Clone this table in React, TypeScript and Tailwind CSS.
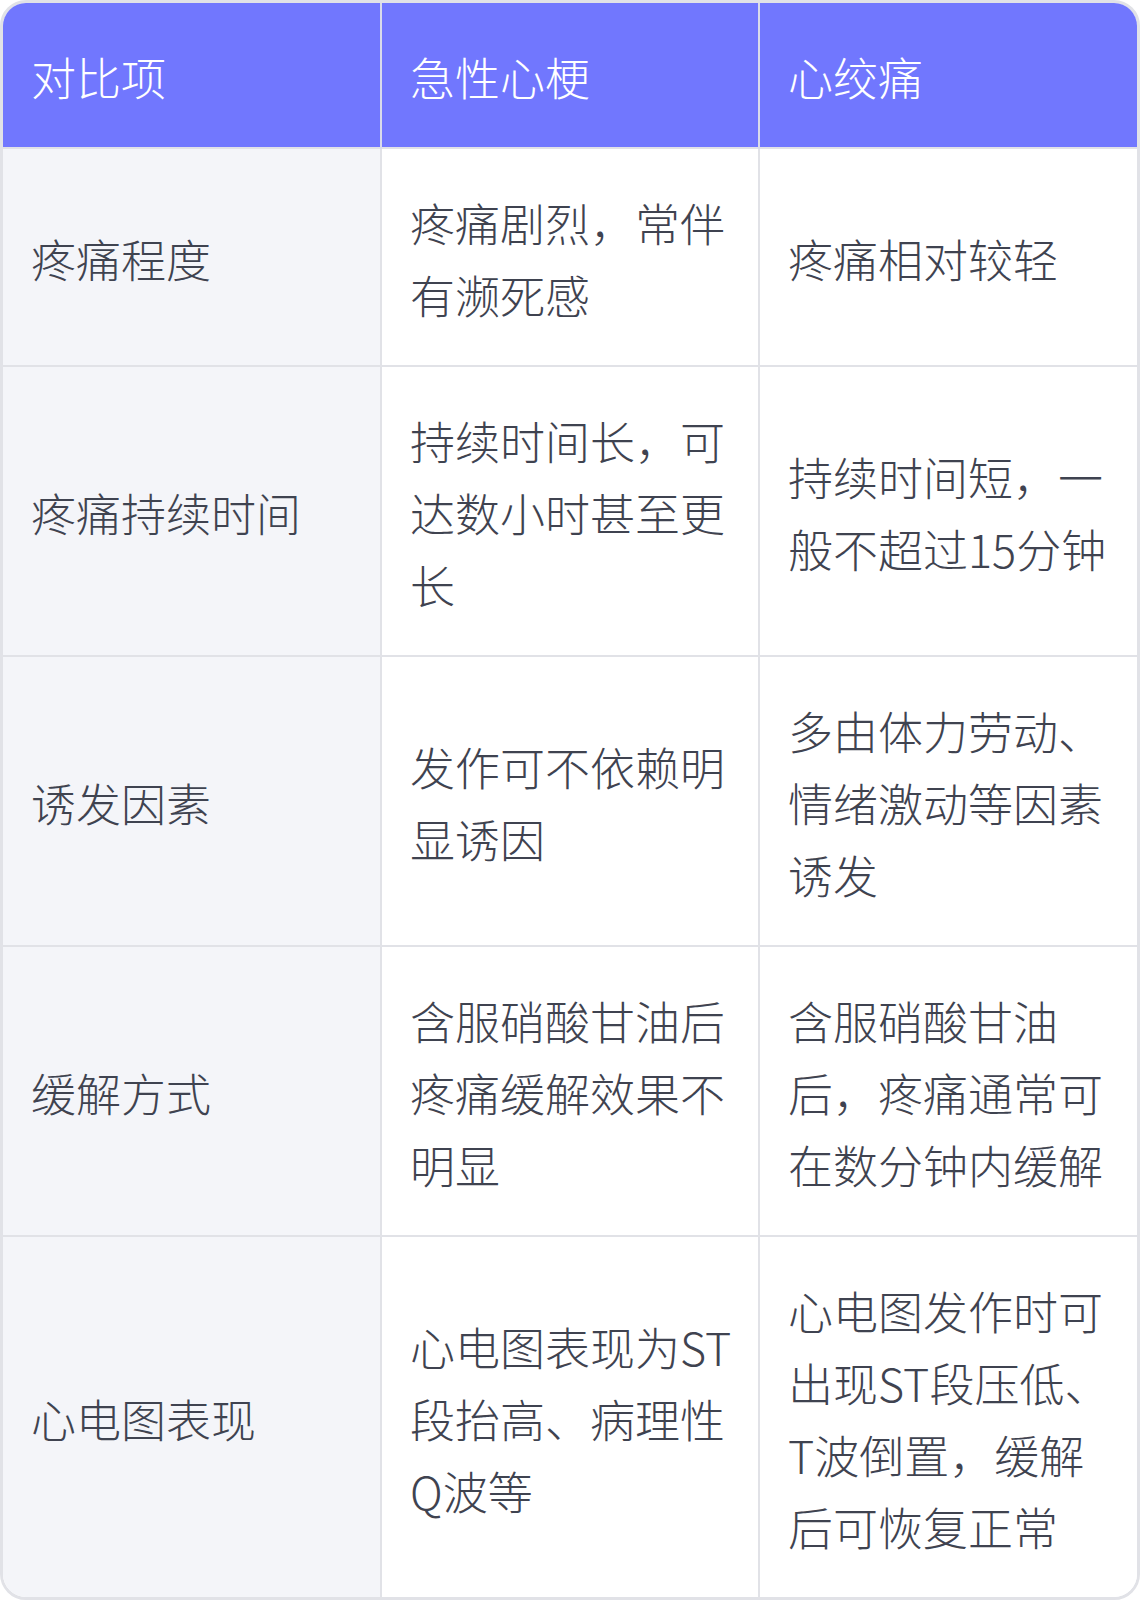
const headers = ["对比项", "急性心梗", "心绞痛"];

const rows: string[][] = [
  ["疼痛程度", "疼痛剧烈，常伴有濒死感", "疼痛相对较轻"],
  ["疼痛持续时间", "持续时间长，可达数小时甚至更长", "持续时间短，一般不超过15分钟"],
  ["诱发因素", "发作可不依赖明显诱因", "多由体力劳动、情绪激动等因素诱发"],
  ["缓解方式", "含服硝酸甘油后疼痛缓解效果不明显", "含服硝酸甘油后，疼痛通常可在数分钟内缓解"],
  ["心电图表现", "心电图表现为ST段抬高、病理性Q波等", "心电图发作时可出现ST段压低、T波倒置，缓解后可恢复正常"],
];

export default function App() {
  return (
    <div className="w-[1140px] bg-white font-['Noto_Sans_CJK_SC',sans-serif]">
      <div className="overflow-hidden rounded-[26px] border-[3px] border-[#e1e2e7]">
        <table className="w-full table-fixed border-collapse text-[45px] font-light leading-[72px]">
          <thead>
            <tr className="bg-[#7177fe] text-white">
              {headers.map((h, i) => (
                <th
                  key={h}
                  className={`pl-[28px] pr-[20px] pt-[38px] pb-[34px] text-left font-light ${i < 2 ? "border-r-2 border-[#d9dbea]" : ""}`}
                >
                  {h}
                </th>
              ))}
            </tr>
          </thead>
          <tbody className="text-[#3f4350]">
            {rows.map((row) => (
              <tr key={row[0]} className="border-t-2 border-[#e1e2e7]">
                {row.map((cell, i) => (
                  <td
                    key={i}
                    className={`pl-[28px] pr-[20px] pt-[38px] pb-[34px] align-middle ${i === 0 ? "bg-[#f4f5f9]" : "bg-white"} ${i < 2 ? "border-r-2 border-[#e1e2e7]" : ""}`}
                  >
                    {cell}
                  </td>
                ))}
              </tr>
            ))}
          </tbody>
        </table>
      </div>
    </div>
  );
}
